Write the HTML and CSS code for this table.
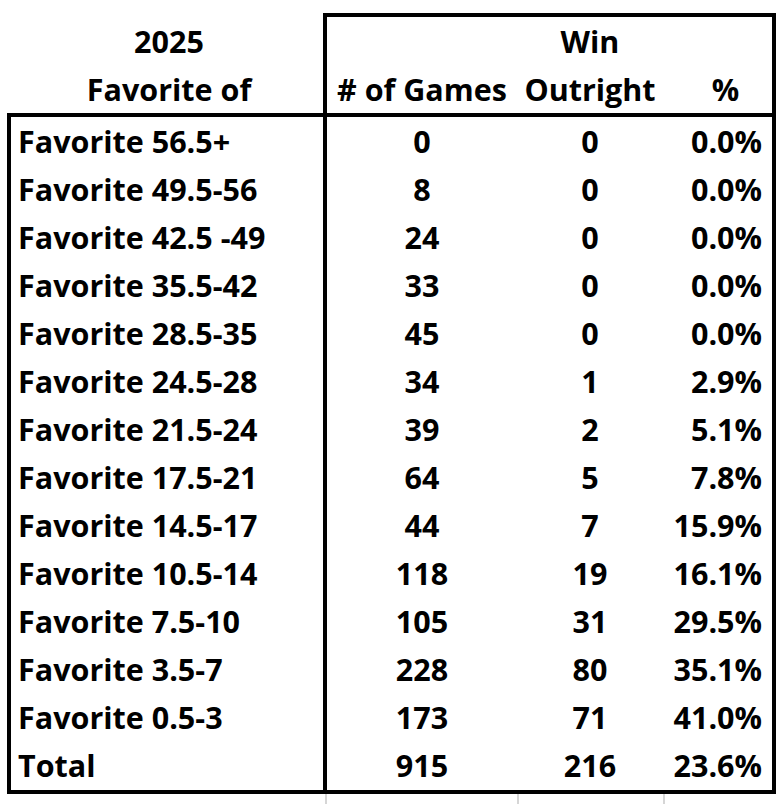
FILE: index.html
```html
<!DOCTYPE html>
<html>
<head>
<meta charset="utf-8">
<link rel="stylesheet" href="styles.css">
</head>
<body>
<div class="sheet">
  <div class="hdr">
    <div class="hfirst"><span>2025</span><span>Favorite of</span></div>
    <div class="hbox">
      <div class="hc"><span></span><span># of Games</span></div>
      <div class="hc"><span>Win</span><span>Outright</span></div>
      <div class="hc pcth"><span></span><span>%</span></div>
    </div>
  </div>
  <div class="body">
    <div class="row"><div class="c1">Favorite 56.5+</div><div class="c2">0</div><div class="c3">0</div><div class="c4">0.0%</div></div>
    <div class="row"><div class="c1">Favorite 49.5-56</div><div class="c2">8</div><div class="c3">0</div><div class="c4">0.0%</div></div>
    <div class="row"><div class="c1">Favorite 42.5 -49</div><div class="c2">24</div><div class="c3">0</div><div class="c4">0.0%</div></div>
    <div class="row"><div class="c1">Favorite 35.5-42</div><div class="c2">33</div><div class="c3">0</div><div class="c4">0.0%</div></div>
    <div class="row"><div class="c1">Favorite 28.5-35</div><div class="c2">45</div><div class="c3">0</div><div class="c4">0.0%</div></div>
    <div class="row"><div class="c1">Favorite 24.5-28</div><div class="c2">34</div><div class="c3">1</div><div class="c4">2.9%</div></div>
    <div class="row"><div class="c1">Favorite 21.5-24</div><div class="c2">39</div><div class="c3">2</div><div class="c4">5.1%</div></div>
    <div class="row"><div class="c1">Favorite 17.5-21</div><div class="c2">64</div><div class="c3">5</div><div class="c4">7.8%</div></div>
    <div class="row"><div class="c1">Favorite 14.5-17</div><div class="c2">44</div><div class="c3">7</div><div class="c4">15.9%</div></div>
    <div class="row"><div class="c1">Favorite 10.5-14</div><div class="c2">118</div><div class="c3">19</div><div class="c4">16.1%</div></div>
    <div class="row"><div class="c1">Favorite 7.5-10</div><div class="c2">105</div><div class="c3">31</div><div class="c4">29.5%</div></div>
    <div class="row"><div class="c1">Favorite 3.5-7</div><div class="c2">228</div><div class="c3">80</div><div class="c4">35.1%</div></div>
    <div class="row"><div class="c1">Favorite 0.5-3</div><div class="c2">173</div><div class="c3">71</div><div class="c4">41.0%</div></div>
    <div class="row last"><div class="c1">Total</div><div class="c2">915</div><div class="c3">216</div><div class="c4">23.6%</div></div>
  </div>
  <div class="tail">
    <div class="t0"></div><div class="t1"></div><div class="t2"></div><div class="t3"></div>
  </div>
</div>
</body>
</html>
```

FILE: styles.css
```css
html, body {
  margin: 0;
  padding: 0;
  background: #fff;
}
body {
  font-family: "Open Sans", "Noto Sans", sans-serif;
  font-weight: 700;
  font-size: 30.5px;
  color: #000;
}
.sheet {
  margin-left: 7px;
  padding-top: 13px;
  width: 769px;
}
.hdr {
  display: grid;
  grid-template-columns: 316px 453px;
}
.hfirst {
  display: flex;
  flex-direction: column;
  align-items: center;
  padding-left: 8px;
  padding-top: 4px;
}
.hfirst span, .hc span {
  height: 48px;
  line-height: 48px;
  display: block;
}
.hbox {
  border: 4px solid #000;
  border-bottom: 0;
  display: grid;
  grid-template-columns: 190px 146px 109px;
}
.hc {
  display: flex;
  flex-direction: column;
  align-items: center;
}
.pcth {
  padding-left: 16px;
}
.body {
  border: 4px solid #000;
}
.row {
  display: grid;
  grid-template-columns: 312px 194px 146px 109px;
  height: 48px;
  line-height: 48px;
}
.row.last {
  height: 49px;
}
.c1 {
  padding-left: 7px;
}
.c2 {
  border-left: 4px solid #000;
  text-align: center;
}
.c3 {
  text-align: center;
}
.c4 {
  text-align: right;
  padding-right: 10px;
}
.tail {
  display: grid;
  grid-template-columns: 318px 192px 146px 110px;
  height: 10px;
}
.t1, .t2, .t3 {
  border-left: 2px solid #d6d6d6;
}
```
